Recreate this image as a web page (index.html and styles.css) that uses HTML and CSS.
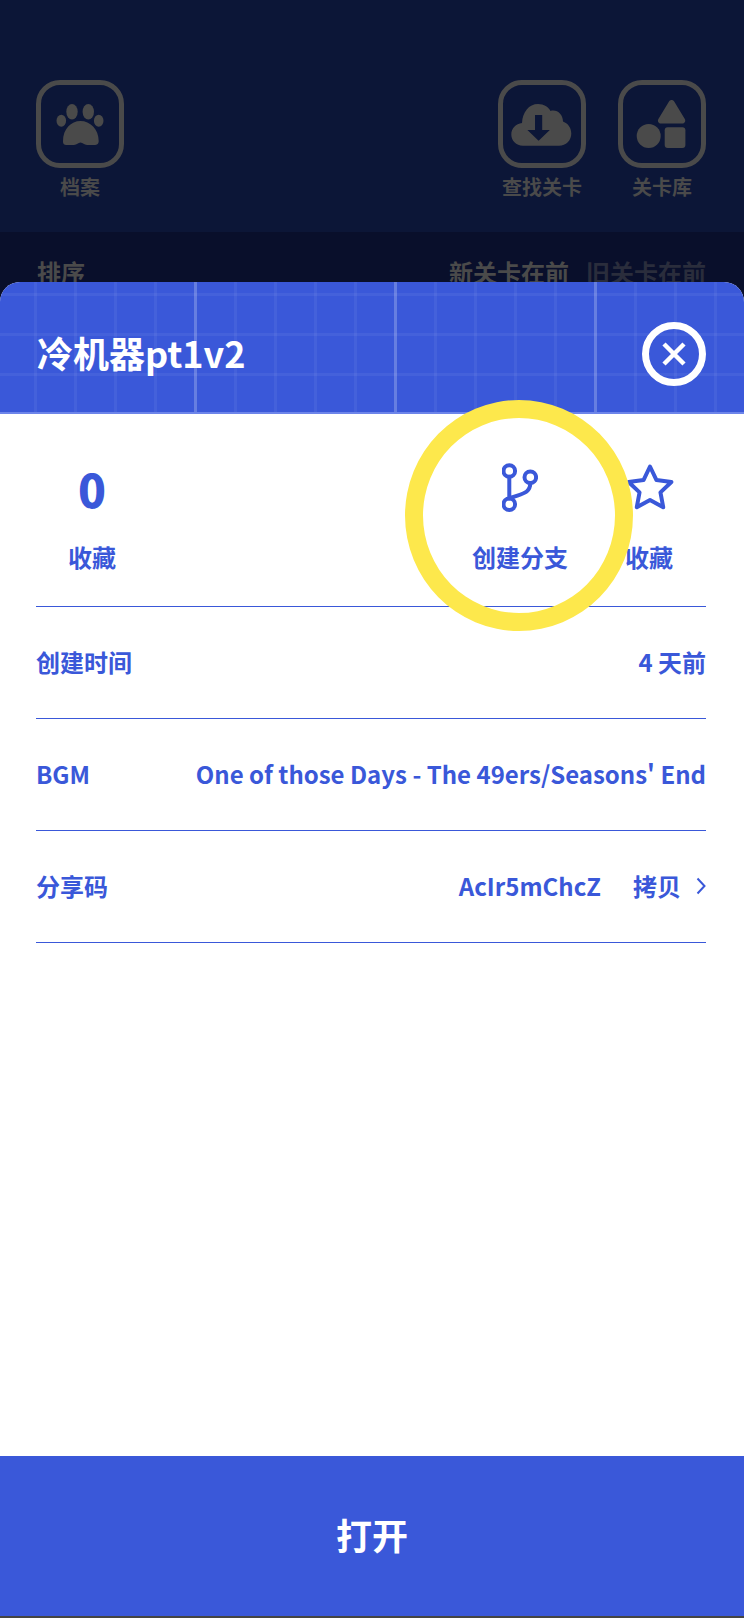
FILE: index.html
```html
<!DOCTYPE html>
<html lang="zh">
<head>
<meta charset="utf-8">
<title>冷机器pt1v2</title>
<link rel="stylesheet" href="styles.css">
</head>
<body>
<div class="page">
  <div class="backdrop">
    <nav class="tools">
      <div class="tool">
        <div class="tool-box">
          <svg viewBox="0 0 78 78" class="tool-icon">
            <ellipse cx="31" cy="26.7" rx="5.7" ry="7.7"/>
            <ellipse cx="47.3" cy="26.7" rx="5.7" ry="7.7"/>
            <ellipse cx="20.3" cy="35.7" rx="4.8" ry="6"/>
            <ellipse cx="57.7" cy="35.7" rx="4.8" ry="6"/>
            <path d="M22 56C22 44 30 36 39.5 36C49 36 57.7 44 57.7 56C57.7 60 55 60 52 60L46 60C43 60 42 57.5 39.5 57.5C37 57.5 36 60 33 60L26 60C23 60 22 59 22 56Z"/>
          </svg>
        </div>
        <span class="tool-label">档案</span>
      </div>
      <div class="tool tool-push">
        <div class="tool-box">
          <svg viewBox="0 0 78 78" class="tool-icon">
            <path d="M20 60.7C13 60.7 8.3 55.5 8.3 49.5C8.3 43.5 13 38.500 19 38C19.500 27 26 19 35 19C41 19 45.500 22 47.500 26C54 24 60 29.500 60 36.500C65.500 38.500 68.300 43.500 68.300 48.500C68.300 55.500 63 60.700 56 60.700Z"/>
            <path class="cut" d="M32 30H39.200V45H46.800L35.600 55.800L24.400 45H32Z"/>
          </svg>
        </div>
        <span class="tool-label">查找关卡</span>
      </div>
      <div class="tool">
        <div class="tool-box">
          <svg viewBox="0 0 78 78" class="tool-icon">
            <path d="M46 16.500C47.200 14.500 50 14.500 51.200 16.500L61.800 34C63 36 61.800 38.500 59.500 38.500H37.700C35.400 38.500 34.200 36 35.400 34Z"/>
            <circle cx="25.700" cy="51" r="12"/>
            <rect x="41.700" y="42.300" width="20.700" height="20.700" rx="3"/>
          </svg>
        </div>
        <span class="tool-label">关卡库</span>
      </div>
    </nav>
    <div class="sort">
      <span class="sort-title">排序</span>
      <span class="sort-on">新关卡在前</span>
      <span class="sort-off">旧关卡在前</span>
    </div>
  </div>

  <section class="sheet">
    <header class="sheet-head">
      <h1 class="sheet-title">冷机器pt1v2</h1>
      <button class="close" type="button" aria-label="关闭">
        <svg viewBox="0 0 50 50" class="close-icon"><path d="M15 15L35 35M35 15L15 35"/></svg>
      </button>
    </header>

    <div class="sheet-body">
      <div class="stats">
        <div class="stat stat-count">
          <span class="stat-num">0</span>
          <span class="stat-label">收藏</span>
        </div>
        <div class="stat stat-fork">
          <svg viewBox="0 0 36 50" class="stat-icon fork">
            <circle cx="7.300" cy="8" r="5.800"/>
            <circle cx="7.300" cy="41.300" r="5.800"/>
            <circle cx="28.300" cy="14.300" r="5.800"/>
            <path d="M7.300 13.800V35.500M28.300 20.100C28.300 31 19 30.500 7.300 35.500"/>
          </svg>
          <span class="stat-label">创建分支</span>
        </div>
        <div class="stat stat-star">
          <svg viewBox="0 0 48 50" class="stat-icon star">
            <path d="M24 3.500L30.470 17.100L45.400 19.050L34.460 29.400L37.200 44.200L24 37L10.800 44.200L13.540 29.400L2.600 19.050L17.530 17.100Z"/>
          </svg>
          <span class="stat-label">收藏</span>
        </div>
        <div class="ring"></div>
      </div>

      <div class="row">
        <span>创建时间</span>
        <span>4 天前</span>
      </div>
      <div class="row">
        <span>BGM</span>
        <span>One of those Days - The 49ers/Seasons' End</span>
      </div>
      <div class="row">
        <span>分享码</span>
        <span class="row-right">
          <span class="code">AcIr5mChcZ</span>
          <span class="copy">拷贝</span>
          <svg viewBox="0 0 10 18" class="chevron"><path d="M1.500 1.500L8.500 9L1.500 16.500"/></svg>
        </span>
      </div>
    </div>

    <button class="open" type="button">打开</button>
  </section>
</div>
</body>
</html>
```
FILE: styles.css
```css
* {
  box-sizing: border-box;
}

html,
body {
  margin: 0;
  padding: 0;
}

body {
  background: #444444;
  font-family: "Noto Sans CJK SC", "Noto Sans", sans-serif;
}

.page {
  position: relative;
  width: 744px;
  height: 1618px;
  overflow: hidden;
  background: #444444;
}

.backdrop {
  height: 300px;
  background: #0c1637;
}

.tools {
  display: flex;
  height: 232px;
  padding: 80px 38px 0 36px;
  gap: 32px;
}

.tool {
  display: flex;
  flex-direction: column;
  align-items: center;
  width: 88px;
}

.tool-push {
  margin-left: auto;
}

.tool-box {
  width: 88px;
  height: 88px;
  border: 5px solid #4a4a4a;
  border-radius: 24px;
}

.tool-icon {
  display: block;
  width: 78px;
  height: 78px;
  fill: #4a4a4a;
}

.tool-icon .cut {
  fill: #0c1637;
}

.tool-label {
  margin-top: 4px;
  font-size: 20px;
  font-weight: 700;
  line-height: 30px;
  color: #4a4a4a;
  white-space: nowrap;
}

.sort {
  display: flex;
  align-items: center;
  height: 68px;
  padding: 12px 38px 0 37px;
  background: #090f2b;
  font-size: 24px;
  line-height: 56px;
  font-weight: 700;
  color: #4a4a4a;
}

.sort-title {
  margin-right: auto;
}

.sort-off {
  margin-left: 17px;
  color: #2a2d3c;
}

.sheet {
  position: absolute;
  top: 282px;
  left: 0;
  right: 0;
  bottom: 2px;
  display: flex;
  flex-direction: column;
  border-radius: 20px 20px 0 0;
  overflow: hidden;
  background: #ffffff;
}

.sheet-head {
  display: flex;
  align-items: center;
  justify-content: space-between;
  flex: none;
  height: 132px;
  padding: 13px 38px 0 37px;
  border-bottom: 2px solid #6d85ea;
  background-color: #3a58d9;
  background-image:
    linear-gradient(90deg, rgba(255, 255, 255, 0.18) 3px, transparent 3px),
    linear-gradient(90deg, rgba(255, 255, 255, 0.05) 3px, transparent 3px),
    linear-gradient(rgba(255, 255, 255, 0.05) 3px, transparent 3px);
  background-size: 200px 100%, 40px 100%, 100% 40px;
  background-position: 194px 0, 34px 0, 0 11px;
}

.sheet-title {
  margin: 0 0 4px;
  font-size: 36px;
  font-weight: 700;
  line-height: 50px;
  color: #ffffff;
}

.close {
  width: 64px;
  height: 64px;
  padding: 0;
  border: 7px solid #ffffff;
  border-radius: 50%;
  background: transparent;
}

.close-icon {
  display: block;
  width: 50px;
  height: 50px;
  fill: none;
  stroke: #ffffff;
  stroke-width: 4.500;
}

.sheet-body {
  flex: 1;
  padding: 0 38px 0 36px;
  color: #3a58d9;
  font-size: 24px;
  font-weight: 700;
}

.stats {
  position: relative;
  display: flex;
  height: 193px;
  border-bottom: 1px solid #3a58d9;
}

.stat {
  display: flex;
  flex-direction: column;
  align-items: center;
  padding-top: 46px;
}

.stat-count {
  width: 48px;
  margin-left: 32px;
  margin-right: auto;
}

.stat-fork {
  padding-top: 48px;
}

.stat-star {
  padding-top: 48px;
  margin-left: 57px;
  margin-right: 33px;
  width: 48px;
}

.stat-num {
  height: 56px;
  font-size: 46px;
  font-weight: 900;
  line-height: 56px;
}

.stat-count .stat-label {
  margin-top: 23px;
}

.stat-icon {
  display: block;
  height: 50px;
  margin-top: 1px;
  margin-bottom: 5px;
  fill: none;
  stroke: #3a58d9;
  stroke-width: 4;
  stroke-linejoin: round;
  stroke-linecap: round;
}

.fork {
  width: 36px;
}

.star {
  width: 48px;
  margin-left: 2px;
  stroke-width: 4;
}

.stat-label {
  margin-top: 21px;
  line-height: 36px;
  white-space: nowrap;
}

.ring {
  position: absolute;
  left: 369px;
  top: -14px;
  width: 228px;
  height: 231px;
  border: 18px solid #fde84c;
  border-radius: 50%;
}

.row {
  display: flex;
  align-items: center;
  justify-content: space-between;
  height: 112px;
  padding-bottom: 2px;
  border-bottom: 1px solid #3a58d9;
  white-space: nowrap;
}

.row-right {
  display: flex;
  align-items: center;
}

.copy {
  margin-left: 32px;
}

.chevron {
  width: 10px;
  height: 18px;
  margin-left: 15px;
  fill: none;
  stroke: #3a58d9;
  stroke-width: 2;
}

.open {
  flex: none;
  height: 160px;
  padding: 0 0 4px;
  border: 0;
  background: #3a58d9;
  color: #ffffff;
  font-family: inherit;
  font-size: 36px;
  font-weight: 700;
}
```
